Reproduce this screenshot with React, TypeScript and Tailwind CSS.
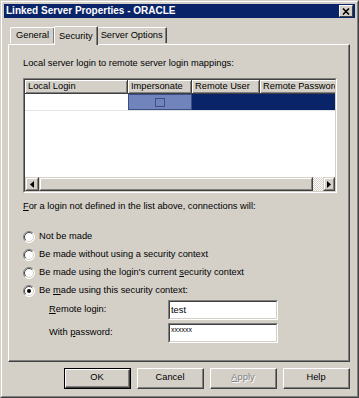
import React from "react";

const font = { fontFamily: '"Liberation Sans", Arial, sans-serif' };

function Radio({ checked }: { checked?: boolean }) {
  return (
    <svg width="12" height="12" viewBox="0 0 12 12" className="shrink-0">
      <circle cx="6" cy="6" r="5.5" fill="#ffffff" />
      <path d="M2.1 9.9 A5.5 5.5 0 0 1 9.9 2.1" stroke="#808080" fill="none" />
      <path d="M2.8 9.2 A4.5 4.5 0 0 1 9.2 2.8" stroke="#404040" fill="none" />
      <path d="M9.9 2.1 A5.5 5.5 0 0 1 2.1 9.9" stroke="#ffffff" fill="none" />
      <path d="M9.2 2.8 A4.5 4.5 0 0 1 2.8 9.2" stroke="#d4d0c8" fill="none" />
      {checked && <circle cx="6" cy="6" r="2" fill="#000000" />}
    </svg>
  );
}

function Btn({ label, def, disabled }: { label: React.ReactNode; def?: boolean; disabled?: boolean }) {
  return (
    <div className={`w-[67px] h-[21px] ${def ? "border border-black" : ""}`}>
      <div className="h-full border border-t-white border-l-white border-r-[#404040] border-b-[#404040]">
        <div className={`h-full flex items-center justify-center border-r border-b border-[#808080] ${disabled ? "text-[#808080] [text-shadow:1px_1px_#fff]" : "text-black"}`}>
          {label}
        </div>
      </div>
    </div>
  );
}

function Head({ w, children }: { w: string; children: React.ReactNode }) {
  return (
    <div className={`${w} h-full shrink-0 border-r border-b border-[#404040] overflow-hidden`}>
      <div className="h-full pl-[2px] flex items-center whitespace-nowrap border-t border-l border-white shadow-[inset_-1px_-1px_#808080]">
        {children}
      </div>
    </div>
  );
}

function Field({ value, small }: { value: string; small?: boolean }) {
  return (
    <div className="w-[110px] h-[20px] border border-t-[#808080] border-l-[#808080] border-r-white border-b-white">
      <div className="h-full border border-t-[#404040] border-l-[#404040] border-r-[#d4d0c8] border-b-[#d4d0c8] bg-white">
        <div className={`pl-[1px] ${small ? "text-[7px] leading-[8px] pt-[1px]" : "leading-[16px]"} text-black`}>{value}</div>
      </div>
    </div>
  );
}

export default function App() {
  return (
    <div className="w-[359px] h-[398px] bg-[#d4d0c8] text-[9.3px] text-black" style={font}>
      <div className="h-full border border-t-[#d4d0c8] border-l-[#d4d0c8] border-r-[#404040] border-b-[#404040]">
        <div className="h-full border border-t-white border-l-white border-r-[#808080] border-b-[#808080] p-[2px] flex flex-col">
          {/* title bar */}
          <div className="h-[14px] bg-[#0a246a] flex items-center justify-between pl-[2px] pr-[2px]">
            <span className="text-white font-bold text-[10px] leading-none">Linked Server Properties - ORACLE</span>
            <div className="w-[14px] h-[12px] bg-[#d4d0c8] border border-t-white border-l-white border-r-[#404040] border-b-[#404040] flex items-center justify-center">
              <svg width="8" height="7" viewBox="0 0 8 7">
                <path d="M1 0.5 L7 6.5 M7 0.5 L1 6.5" stroke="#000" strokeWidth="1.6" />
              </svg>
            </div>
          </div>

          {/* tabs */}
          <div className="mt-[8px] h-[18px] flex items-end pl-[6px] relative z-10">
            <div className="h-[16px] mb-[1px] px-[5px] flex items-center border-t border-l border-white rounded-tl-[2px] border-r border-r-[#404040] shadow-[inset_-1px_0_#808080]">
              General
            </div>
            <div className="h-[19px] -mb-[1px] ml-[-1px] px-[4px] flex items-start pt-[3px] bg-[#d4d0c8] border-t border-l border-white rounded-tl-[2px] border-r border-r-[#404040] shadow-[inset_-1px_0_#808080]">
              Security
            </div>
            <div className="h-[16px] mb-[1px] px-[3px] flex items-center border-t border-r border-t-white border-r-[#404040] shadow-[inset_-1px_0_#808080]">
              Server Options
            </div>
          </div>

          {/* panel */}
          <div className="ml-[4px] w-[342px] h-[318px] border border-t-white border-l-white border-r-[#404040] border-b-[#404040]">
            <div className="h-full border-r border-b border-[#808080] pl-[14px] pt-[12px] flex flex-col">
              <div className="leading-[12px]">Local server login to remote server login mappings:</div>

              {/* grid */}
              <div className="mt-[9px] w-[314px] h-[115px] border border-t-[#808080] border-l-[#808080] border-r-white border-b-white">
                <div className="h-full border border-t-[#404040] border-l-[#404040] border-r-[#d4d0c8] border-b-[#d4d0c8] bg-white flex flex-col overflow-hidden">
                  <div className="h-[14px] flex bg-[#d4d0c8] shrink-0">
                    <Head w="w-[103px]">Local Login</Head>
                    <Head w="w-[64px]">Impersonate</Head>
                    <Head w="w-[68px]">Remote User</Head>
                    <Head w="w-[80px]">Remote Password</Head>
                  </div>
                  <div className="h-[17px] flex shrink-0 border-b border-[#e4e4e4]">
                    <div className="w-[103px] bg-white"></div>
                    <div className="w-[64px] bg-[#7184bb] border border-[#3a4d86] flex items-center justify-center">
                      <div className="w-[10px] h-[9px] border border-[#3f4f80]"></div>
                    </div>
                    <div className="flex-1 bg-[#0a246a]"></div>
                  </div>
                  <div className="flex-1"></div>
                  {/* scrollbar */}
                  <div className="h-[14px] flex shrink-0">
                    <div className="w-[14px] bg-[#d4d0c8] border border-t-[#d4d0c8] border-l-[#d4d0c8] border-r-[#404040] border-b-[#404040]">
                      <div className="h-full border border-t-white border-l-white border-r-[#808080] border-b-[#808080] flex items-center justify-center">
                        <svg width="4" height="7" viewBox="0 0 4 7"><path d="M4 0 L0 3.5 L4 7 Z" fill="#000" /></svg>
                      </div>
                    </div>
                    <div className="w-[274px] bg-[#d4d0c8] border border-t-[#d4d0c8] border-l-[#d4d0c8] border-r-[#404040] border-b-[#404040]">
                      <div className="h-full border border-t-white border-l-white border-r-[#808080] border-b-[#808080]"></div>
                    </div>
                    <div className="flex-1 bg-[repeating-conic-gradient(#ffffff_0_25%,#d4d0c8_0_50%)] bg-[length:2px_2px]"></div>
                    <div className="w-[12px] bg-[#d4d0c8] border border-t-[#d4d0c8] border-l-[#d4d0c8] border-r-[#404040] border-b-[#404040]">
                      <div className="h-full border border-t-white border-l-white border-r-[#808080] border-b-[#808080] flex items-center justify-center">
                        <svg width="4" height="7" viewBox="0 0 4 7"><path d="M0 0 L4 3.5 L0 7 Z" fill="#000" /></svg>
                      </div>
                    </div>
                  </div>
                </div>
              </div>

              <div className="mt-[7px] leading-[12px]">
                <u className="underline-offset-[1px]">F</u>or a login not defined in the list above, connections will:
              </div>

              <div className="mt-[16px] flex flex-col">
                <div className="h-[18px] flex items-center gap-[4px]">
                  <Radio /> <span>Not be made</span>
                </div>
                <div className="h-[18px] flex items-center gap-[4px]">
                  <Radio /> <span>Be made without using a security context</span>
                </div>
                <div className="h-[18px] flex items-center gap-[4px]">
                  <Radio /> <span>Be made using the login's current <u className="underline-offset-[1px]">s</u>ecurity context</span>
                </div>
                <div className="h-[18px] flex items-center gap-[4px]">
                  <Radio checked /> <span>Be <u className="underline-offset-[1px]">m</u>ade using this security context:</span>
                </div>
              </div>

              <div className="grid grid-cols-[119px_110px] gap-y-[3px] pl-[26px] items-center">
                <div><u className="underline-offset-[1px]">R</u>emote login:</div>
                <Field value="test" />
                <div>With <u className="underline-offset-[1px]">p</u>assword:</div>
                <Field value="xxxxxx" small />
              </div>
            </div>
          </div>

          {/* buttons */}
          <div className="mt-[6px] flex justify-end gap-[6px] pr-[5px]">
            <Btn label="OK" def />
            <Btn label="Cancel" />
            <Btn label={<span><u className="underline-offset-[1px]">A</u>pply</span>} disabled />
            <Btn label="Help" />
          </div>
        </div>
      </div>
    </div>
  );
}
